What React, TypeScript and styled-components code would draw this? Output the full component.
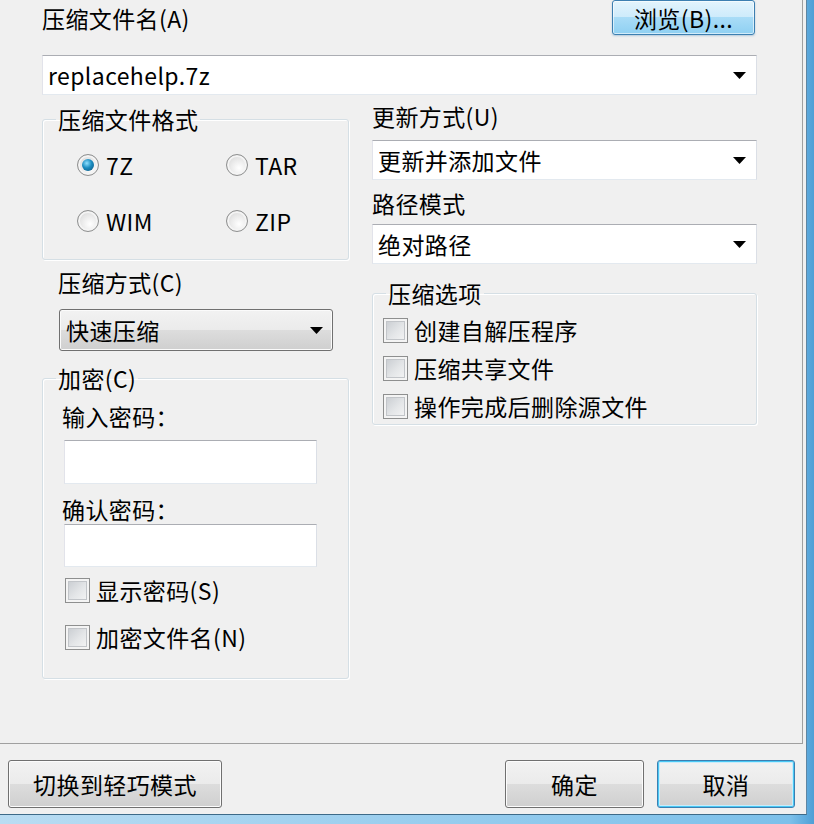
import React from 'react';
import styled, { createGlobalStyle, css } from 'styled-components';

const GlobalStyle = createGlobalStyle`
  html, body {
    margin: 0;
    padding: 0;
  }
  body {
    background: #f0f0f0;
    font-family: "Noto Sans CJK SC", "Liberation Sans", sans-serif;
    color: #000;
    overflow: hidden;
  }
`;

const Frame = styled.div`
  width: 814px;
  height: 824px;
  box-sizing: border-box;
  padding: 0 7px 9px 0;
  background: linear-gradient(to right, #b9dcf2 0px, #7cc0ea 790px, #4f9fd6 814px);
`;

const Client = styled.div`
  width: 100%;
  height: 100%;
  box-sizing: border-box;
  background: #f0f0f0;
  border-right: 1px solid #5f86a3;
  border-bottom: 1px solid #3d6a88;
  display: flex;
  flex-direction: column;
`;

const Panel = styled.div`
  height: 744px;
  margin-right: 3px;
  box-sizing: border-box;
  border-right: 1px solid #a0a0a0;
  border-bottom: 1px solid #a0a0a0;
  padding: 0 45px 0 42px;
  font-size: 23px;
  letter-spacing: 0.4px;
`;

const HeaderRow = styled.div`
  height: 35px;
  display: flex;
  align-items: center;
  justify-content: space-between;
`;

const Text = styled.div<{ $indent?: number; $top?: number }>`
  line-height: 26px;
  white-space: nowrap;
  margin-left: ${(p) => p.$indent ?? 0}px;
  margin-top: ${(p) => p.$top ?? 0}px;
`;

const buttonBase = css`
  box-sizing: border-box;
  display: flex;
  align-items: center;
  justify-content: center;
  font-family: inherit;
  font-size: 23px;
  letter-spacing: 0.4px;
  color: #000;
  border-radius: 3px;
  padding: 0;
`;

const BrowseButton = styled.div`
  ${buttonBase};
  width: 143px;
  height: 35px;
  margin-right: 2px;
  border: 1px solid #3c7fb1;
  background: linear-gradient(to bottom, #e3f4fd 0%, #cdebfb 50%, #a9dcf7 50%, #8fd0f2 100%);
  box-shadow: inset 0 0 0 1px rgba(255, 255, 255, 0.6), 0 1px 2px rgba(60, 127, 177, 0.35);
`;

const DialogButton = styled.div<{ $width: number; $default?: boolean }>`
  ${buttonBase};
  width: ${(p) => p.$width}px;
  height: 48px;
  border: 1px solid ${(p) => (p.$default ? '#3c7fb1' : '#707070')};
  background: linear-gradient(to bottom, #f2f2f2 0%, #ebebeb 50%, #dddddd 50%, #cfcfcf 100%);
  box-shadow: ${(p) =>
    p.$default
      ? 'inset 0 0 0 1px #48c8f5, inset 0 0 0 2px #c8ecfb'
      : 'inset 0 0 0 1px #fcfcfc'};
`;

const Combo = styled.div<{ $variant?: 'edit' | 'list'; $height: number; $top: number; $width?: number; $indent?: number }>`
  box-sizing: border-box;
  height: ${(p) => p.$height}px;
  margin-top: ${(p) => p.$top}px;
  margin-left: ${(p) => p.$indent ?? 0}px;
  width: ${(p) => (p.$width ? `${p.$width}px` : 'auto')};
  display: flex;
  align-items: center;
  justify-content: space-between;
  white-space: nowrap;
  ${(p) =>
    p.$variant === 'list'
      ? css`
          padding: 0 9px 0 6px;
          border: 1px solid #707070;
          border-radius: 3px;
          background: linear-gradient(to bottom, #f2f2f2 0%, #ebebeb 50%, #dddddd 50%, #cfcfcf 100%);
          box-shadow: inset 0 0 0 1px #fbfbfb;
        `
      : css`
          padding: 0 10px 0 5px;
          background: #fff;
          border: 1px solid #e3e9ef;
          border-top-color: #abadb3;
          border-left-color: #e2e3ea;
          border-right-color: #dbdfe6;
        `}
`;

const Arrow = () => (
  <svg width="13" height="7" viewBox="0 0 13 7">
    <polygon points="0,0 13,0 6.5,7" fill="#000" />
  </svg>
);

const Columns = styled.div`
  display: flex;
  gap: 23px;
  margin-top: 8px;
`;

const Column = styled.div<{ $width?: number }>`
  display: flex;
  flex-direction: column;
  ${(p) => (p.$width ? `width: ${p.$width}px; flex: none;` : 'flex: 1;')}
`;

const GroupBox = styled.fieldset<{ $top: number }>`
  margin: ${(p) => p.$top}px 0 0 0;
  padding: 0;
  min-width: 0;
  border: 1px solid #d5dfe5;
  border-radius: 3px;
  box-shadow: inset 1px 1px 0 #fff, 1px 1px 0 #fff;
`;

const Legend = styled.legend`
  margin-left: 13px;
  padding: 0 2px;
  line-height: 26px;
`;

const RadioGrid = styled.div`
  display: grid;
  grid-template-columns: 149px 149px;
  row-gap: 24px;
  padding: 17px 0 22px 34px;
`;

const RadioItem = styled.div`
  display: flex;
  align-items: center;
  gap: 7px;
  height: 32px;
`;

const RadioDot = styled.span<{ $checked?: boolean }>`
  position: relative;
  width: 22px;
  height: 22px;
  box-sizing: border-box;
  border-radius: 50%;
  border: 1px solid #8e8f8f;
  background: radial-gradient(circle at 60% 65%, #ffffff 0%, #e6e6e6 55%, #c9c9c9 100%);
  box-shadow: inset 0 0 0 2px #f4f4f4;
  flex: none;

  &::after {
    content: '';
    display: ${(p) => (p.$checked ? 'block' : 'none')};
    position: absolute;
    left: 4px;
    top: 4px;
    width: 12px;
    height: 12px;
    border-radius: 50%;
    background: radial-gradient(circle at 40% 35%, #8fe0ff 0%, #1b8cc0 45%, #0b4f78 100%);
  }
`;

const Inner = styled.div<{ $pad: string }>`
  display: flex;
  flex-direction: column;
  padding: ${(p) => p.$pad};
`;

const TextBox = styled.div<{ $height: number; $top: number }>`
  box-sizing: border-box;
  width: 253px;
  height: ${(p) => p.$height}px;
  margin: ${(p) => p.$top}px 0 0 2px;
  background: #fff;
  border: 1px solid #e3e9ef;
  border-top-color: #abadb3;
  border-left-color: #e2e3ea;
  border-right-color: #dbdfe6;
`;

const CheckRow = styled.div<{ $top?: number; $indent?: number }>`
  display: flex;
  align-items: center;
  gap: 6px;
  height: 36px;
  white-space: nowrap;
  margin-top: ${(p) => p.$top ?? 0}px;
  margin-left: ${(p) => p.$indent ?? 0}px;
`;

const CheckBox = styled.span`
  width: 25px;
  height: 25px;
  box-sizing: border-box;
  flex: none;
  border: 1px solid #8e8f8f;
  background: linear-gradient(135deg, #c4c8cd 0%, #e4e6e8 55%, #f7f7f7 100%);
  box-shadow: inset 0 0 0 2px #f4f4f4, inset 0 0 0 3px #c2c5c9;
`;

const Footer = styled.div`
  display: flex;
  align-items: flex-start;
  padding: 16px 11px 0 8px;
`;

const FooterRight = styled.div`
  margin-left: auto;
  display: flex;
  gap: 13px;
`;

const formats = [
  { label: '7Z', checked: true },
  { label: 'TAR' },
  { label: 'WIM' },
  { label: 'ZIP' },
];

const options = ['创建自解压程序', '压缩共享文件', '操作完成后删除源文件'];

export default function App() {
  return (
    <>
      <GlobalStyle />
      <Frame>
        <Client>
          <Panel>
            <HeaderRow>
              <Text>压缩文件名(A)</Text>
              <BrowseButton>浏览(B)...</BrowseButton>
            </HeaderRow>
            <Combo $height={40} $top={20}>
              <span>replacehelp.7z</span>
              <Arrow />
            </Combo>

            <Columns>
              <Column $width={307}>
                <GroupBox $top={3}>
                  <Legend>压缩文件格式</Legend>
                  <RadioGrid>
                    {formats.map((f) => (
                      <RadioItem key={f.label}>
                        <RadioDot $checked={f.checked} />
                        <span>{f.label}</span>
                      </RadioItem>
                    ))}
                  </RadioGrid>
                </GroupBox>

                <Text $indent={16} $top={9}>压缩方式(C)</Text>
                <Combo $variant="list" $height={42} $top={14} $width={274} $indent={17}>
                  <span>快速压缩</span>
                  <Arrow />
                </Combo>

                <GroupBox $top={14}>
                  <Legend>加密(C)</Legend>
                  <Inner $pad="12px 0 23px 19px">
                    <Text>输入密码：</Text>
                    <TextBox $height={44} $top={11} />
                    <Text $top={12}>确认密码：</Text>
                    <TextBox $height={43} $top={2} />
                    <CheckRow $top={5} $indent={3}>
                      <CheckBox />
                      <span>显示密码(S)</span>
                    </CheckRow>
                    <CheckRow $top={11} $indent={3}>
                      <CheckBox />
                      <span>加密文件名(N)</span>
                    </CheckRow>
                  </Inner>
                </GroupBox>
              </Column>

              <Column>
                <Text>更新方式(U)</Text>
                <Combo $height={40} $top={11}>
                  <span>更新并添加文件</span>
                  <Arrow />
                </Combo>
                <Text $top={10}>路径模式</Text>
                <Combo $height={40} $top={8}>
                  <span>绝对路径</span>
                  <Arrow />
                </Combo>

                <GroupBox $top={16}>
                  <Legend>压缩选项</Legend>
                  <Inner $pad="6px 0 0 10px">
                    {options.map((o, i) => (
                      <CheckRow key={o} $top={i === 0 ? 0 : 2}>
                        <CheckBox />
                        <span>{o}</span>
                      </CheckRow>
                    ))}
                  </Inner>
                </GroupBox>
              </Column>
            </Columns>
          </Panel>

          <Footer>
            <DialogButton $width={214}>切换到轻巧模式</DialogButton>
            <FooterRight>
              <DialogButton $width={139}>确定</DialogButton>
              <DialogButton $width={138} $default>
                取消
              </DialogButton>
            </FooterRight>
          </Footer>
        </Client>
      </Frame>
    </>
  );
}
